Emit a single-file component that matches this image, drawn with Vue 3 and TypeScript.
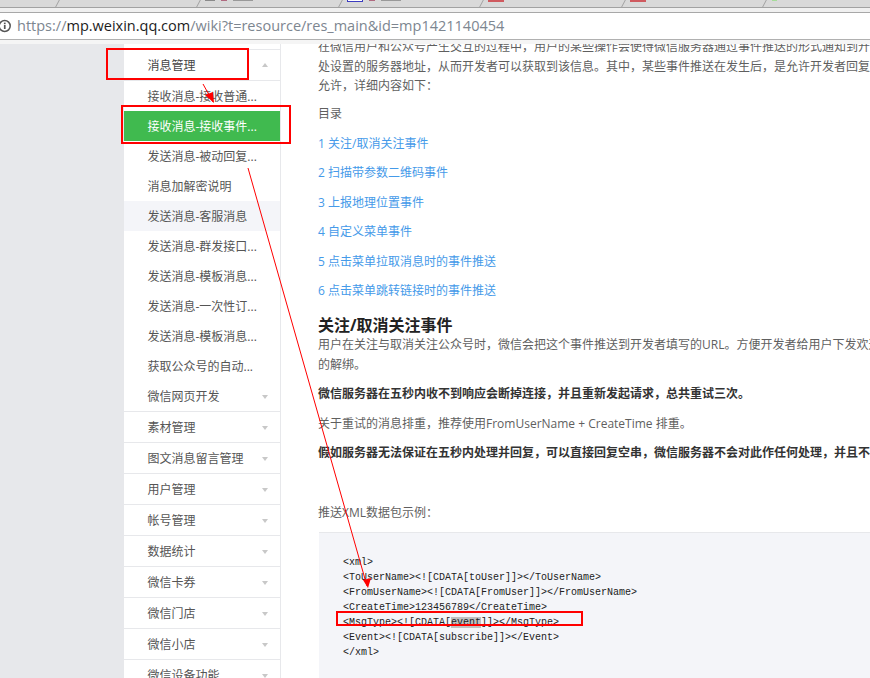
<script setup lang="ts">
const subItems = [
  { t: '接收消息-接收普通...' },
  { t: '接收消息-接收事件...', active: true },
  { t: '发送消息-被动回复...' },
  { t: '消息加解密说明' },
  { t: '发送消息-客服消息', hover: true },
  { t: '发送消息-群发接口...' },
  { t: '发送消息-模板消息...' },
  { t: '发送消息-一次性订...' },
  { t: '发送消息-模板消息...' },
  { t: '获取公众号的自动...' },
]
const sections = ['素材管理', '图文消息留言管理', '用户管理', '帐号管理', '数据统计', '微信卡券', '微信门店', '微信小店', '微信设备功能']
const links = ['1 关注/取消关注事件', '2 扫描带参数二维码事件', '3 上报地理位置事件', '4 自定义菜单事件', '5 点击菜单拉取消息时的事件推送', '6 点击菜单跳转链接时的事件推送']
</script>

<template>
  <div class="root">
    <div class="tabs">
      <div class="tab first"></div>
      <div class="tab"></div>
      <div class="tab"><i class="fav gray"></i><i class="frag r"></i><i class="frag g"></i></div>
      <div class="tab"><i class="fav box"></i><i class="frag r"></i><i class="frag g"></i></div>
      <div class="tab"><i class="fav red"></i></div>
      <div class="tab"><i class="fav red"></i></div>
      <div class="tab"><i class="fav green"></i></div>
    </div>
    <div class="gap"></div>
    <div class="addr">
      <svg class="info" width="12" height="14" viewBox="0 0 12 14">
        <circle cx="4.7" cy="7" r="5.5" fill="none" stroke="#555" stroke-width="1.5" />
        <rect x="3.9" y="6" width="1.7" height="4" fill="#555" />
        <rect x="3.9" y="3.6" width="1.7" height="1.6" fill="#555" />
      </svg>
      <span class="url">https://<b>mp.weixin.qq.com</b>/wiki?t=resource/res_main&amp;id=mp1421140454</span>
    </div>
    <div class="gap2"></div>
    <div class="page">
      <div class="left"></div>
      <nav class="side">
        <div class="head">消息管理<i class="up"></i></div>
        <div v-for="(s, i) in subItems" :key="i" class="sub" :class="{ active: s.active, hover: s.hover }">{{ s.t }}</div>
        <div class="sub dev">微信网页开发<i class="down"></i></div>
        <div v-for="s in sections" :key="s" class="sec">{{ s }}<i class="down"></i></div>
      </nav>
      <main class="main">
        <p class="intro">在微信用户和公众号产生交互的过程中，用户的某些操作会使得微信服务器通过事件推送的形式通知到开发者在开发者中心<br />处设置的服务器地址，从而开发者可以获取到该信息。其中，某些事件推送在发生后，是允许开发者回复用户的，某些则不<br />允许，详细内容如下：</p>
        <p class="toc">目录</p>
        <p v-for="l in links" :key="l" class="link">{{ l }}</p>
        <h3>关注/取消关注事件</h3>
        <p>用户在关注与取消关注公众号时，微信会把这个事件推送到开发者填写的URL。方便开发者给用户下发欢迎消息或者做帐号<br />的解绑。</p>
        <p><strong>微信服务器在五秒内收不到响应会断掉连接，并且重新发起请求，总共重试三次。</strong></p>
        <p>关于重试的消息排重，推荐使用FromUserName + CreateTime 排重。</p>
        <p class="long"><strong>假如服务器无法保证在五秒内处理并回复，可以直接回复空串，微信服务器不会对此作任何处理，并且不会发起重试。</strong></p>
        <p class="lead">推送XML数据包示例：</p>
        <pre class="code">&lt;xml&gt;
&lt;ToUserName&gt;&lt;![CDATA[toUser]]&gt;&lt;/ToUserName&gt;
&lt;FromUserName&gt;&lt;![CDATA[FromUser]]&gt;&lt;/FromUserName&gt;
&lt;CreateTime&gt;123456789&lt;/CreateTime&gt;
&lt;MsgType&gt;&lt;![CDATA[<mark>event</mark>]]&gt;&lt;/MsgType&gt;
&lt;Event&gt;&lt;![CDATA[subscribe]]&gt;&lt;/Event&gt;
&lt;/xml&gt;</pre>
      </main>
    </div>
    <svg class="marks" width="870" height="678" viewBox="0 0 870 678">
      <g fill="none" stroke="#f00" stroke-width="2">
        <rect x="107" y="49" width="141" height="30" />
        <rect x="122" y="106" width="168" height="37" />
        <rect x="337" y="612" width="245" height="13" />
      </g>
      <g stroke="#f00" stroke-width="1" fill="none">
        <line x1="203" y1="84" x2="213" y2="102" />
        <line x1="248" y1="168" x2="367" y2="586" />
      </g>
      <polygon points="205,95 213,92 214,103" fill="#f00" />
      <polygon points="363,580 371,578 368,588" fill="#f00" />
    </svg>
  </div>
</template>

<style scoped>
.root {
  position: relative;
  width: 870px;
  height: 678px;
  overflow: hidden;
  display: flex;
  flex-direction: column;
  background: #fff;
  font-family: "Open Sans", "Noto Sans CJK SC", sans-serif;
  font-size: 12px;
}
.tabs {
  height: 7px;
  flex: none;
  display: flex;
  background: #d9d9d9;
  border-bottom: 1px solid #a2a2a2;
  overflow: hidden;
}
.tab {
  width: 141.6px;
  flex: none;
  display: flex;
  gap: 6px;
  padding-left: 8px;
  box-sizing: border-box;
  position: relative;
}
.tab::before {
  content: "";
  position: absolute;
  left: 1px;
  top: -1px;
  width: 1px;
  height: 9px;
  background: #a2a2a2;
  transform: skewX(-28deg);
}
.tab.first { width: 55.5px; }
.tab.first::before { display: none; }
.fav { display: block; height: 2px; width: 16px; flex: none; }
.fav.gray { background: #8a8a8a; height: 1px; width: 10px; }
.fav.box { border: 1px solid #3c3cc0; border-top: 0; height: 1px; width: 14px; background: #fff; }
.fav.red { background: #cf5a5f; }
.fav.green { background: #a6dc9a; width: 5px; height: 1px; margin-left: 1px; }
.frag { display: block; height: 1px; flex: none; }
.frag.r { background: #b06a80; width: 6px; }
.frag.g { background: #999; width: 20px; }
.gap { height: 4px; flex: none; background: #f0f0f0; }
.addr {
  height: 25px;
  padding-bottom: 1px;
  flex: none;
  background: #fff;
  border-top: 1px solid #a8a8a8;
  border-bottom: 1px solid #b0b0b0;
  display: flex;
  align-items: center;
  overflow: hidden;
  white-space: nowrap;
}
.info { flex: none; margin-right: 5px; }
.url {
  font-size: 14.5px;
  color: #7d8690;
}
.url b { font-weight: 400; color: #1c1c1c; }
.gap2 { height: 4px; flex: none; background: #f5f5f5; }
.page {
  flex: 1;
  min-height: 0;
  display: flex;
  overflow: hidden;
  background: #fff;
}
.left { width: 124px; flex: none; background: #e7e8eb; }
.side {
  width: 157px;
  flex: none;
  box-sizing: border-box;
  padding-top: 5px;
  background: #fff;
  border-right: 1px solid #e7e8eb;
  color: #555;
  white-space: nowrap;
}
.head, .sub, .sec {
  position: relative;
  padding-left: 23.5px;
  box-sizing: border-box;
}
.head {
  height: 32px;
  line-height: 32px;
  border-top: 1px solid #e7e8eb;
  border-bottom: 1px solid #e7e8eb;
  color: #444;
}
.sub { height: 30px; line-height: 32px; }
.sub.active { background: #40ba4f; color: #fff; }
.sub.hover { background: #f4f5f9; }
.sub.dev { height: 31px; border-bottom: 1px solid #e7e8eb; }
.sec { height: 31px; line-height: 32px; border-bottom: 1px solid #e7e8eb; }
.up, .down {
  position: absolute;
  right: 12px;
  width: 0;
  height: 0;
  border-left: 3.5px solid transparent;
  border-right: 3.5px solid transparent;
}
.up { top: 13px; border-bottom: 4px solid #c8c8c8; }
.down { top: 14px; border-top: 4px solid #c8c8c8; }
.main {
  flex: 1;
  min-width: 0;
  box-sizing: border-box;
  padding-left: 37px;
  margin-top: -7px;
  color: #5f5f5f;
  line-height: 19.5px;
  white-space: nowrap;
  overflow: hidden;
}
.main p { margin: 0 0 10px; }
.main .intro { margin-bottom: 8.5px; }
.main .link { color: #459ae9; }
.main .link:last-of-type { margin-bottom: 0; }
h3 {
  margin: 14.5px 0 0;
  height: 20px;
  line-height: 20px;
  font-size: 16px;
  font-weight: 700;
  color: #222;
}
strong { color: #333; font-weight: 700; }
.main .long { margin-bottom: 40px; }
.code {
  margin: 0 0 0 1px;
  padding: 22px 24px 30px;
  background: #f4f5f9;
  border-top: 1px solid #e7e8eb;
  font-family: "Liberation Mono", monospace;
  font-size: 10px;
  line-height: 15px;
  color: #222;
}
mark { background: #c0c0c0; color: #222; }
.marks { position: absolute; left: 0; top: 0; pointer-events: none; }
</style>
